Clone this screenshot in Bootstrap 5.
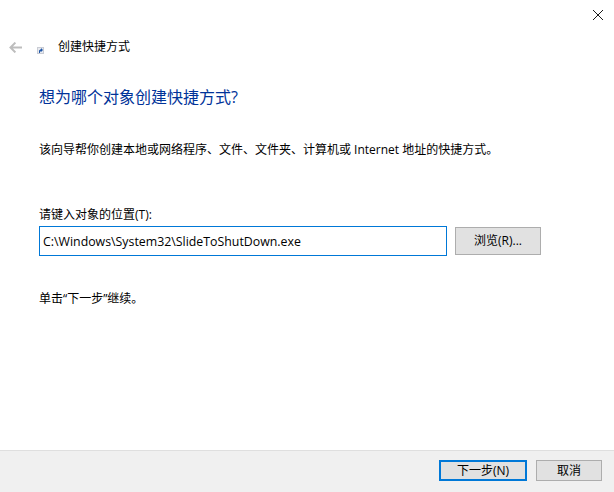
<!DOCTYPE html>
<html lang="zh-CN">
<head>
<meta charset="utf-8">
<title>创建快捷方式</title>
<link href="https://cdn.jsdelivr.net/npm/bootstrap@5.3.0/dist/css/bootstrap.min.css" rel="stylesheet">
<style>
html, body { height: 100%; }
body { font-family: "Open Sans", "Noto Sans CJK SC", sans-serif; font-size: 12px; line-height: 16px; color: #000; background: #fff; overflow: hidden; }
.wiz { height: 492px; }
.close-row { height: 30px; padding-right: 11px; padding-top: 10px; }
.nav-row { height: 16px; margin-top: 9px; padding-left: 9px; }
.back-ico { width: 13px; height: 11px; }
.sc-ico { width: 7px; height: 7px; margin-left: 15px; margin-top: 6px; }
.nav-title { margin-left: 14px; }
.wiz-body { padding-left: 39px; padding-right: 73px; }
.wiz-head { font-size: 16px; line-height: 22px; color: #003399; margin-top: 31px; }
.wiz-desc { margin-top: 34px; }
.wiz-label { margin-top: 49px; margin-bottom: 3px; }
.path-input { width: 408px; height: 30px; border: 1px solid #0078d7; border-radius: 0; padding: 0 3px; font-size: 12.35px; line-height: 16px; color: #000; box-shadow: none; }
.path-input:focus { border-color: #0078d7; box-shadow: none; }
.win-btn { background: #e1e1e1; border: 1px solid #adadad; border-radius: 0; color: #000; font-size: 12px; line-height: 16px; padding: 0; height: 28px; }
.win-btn:hover { background: #e1e1e1; border-color: #adadad; color: #000; }
.browse-btn { width: 86px; margin-left: 8px; }
.wiz-next { margin-top: 35px; }
.wiz-foot { height: 42px; background: #f0f0f0; border-top: 1px solid #dfdfdf; padding-right: 12px; padding-top: 9px; }
.next-btn { width: 88px; height: 21px; border: 2px solid #0078d7; }
.next-btn:hover { border-color: #0078d7; }
.cancel-btn { width: 66px; height: 21px; margin-left: 9px; }
</style>
</head>
<body>
<div class="wiz d-flex flex-column">
  <div class="close-row d-flex justify-content-end align-items-start">
    <svg width="10" height="10" viewBox="0 0 10 10" fill="none" stroke="#1a1a1a" stroke-width="1"><path d="M0 0L10 10M10 0L0 10"/></svg>
  </div>
  <div class="nav-row d-flex align-items-center">
    <svg class="back-ico" viewBox="0 0 13 11" fill="none" stroke="#bdbdbd" stroke-width="2"><path d="M13 5.5H1.5M6.4 .6L1.5 5.5L6.4 10.4"/></svg>
    <svg class="sc-ico" viewBox="0 0 7 7"><rect width="7" height="7" fill="#c9ccd4"/><rect x="1" y="1" width="5" height="5" fill="#e8eaef"/><path d="M2 6V3.5L4 2V1L6 3L4 5V4L3 5V6Z" fill="#1f57a8"/></svg>
    <span class="nav-title">创建快捷方式</span>
  </div>
  <div class="wiz-body flex-grow-1">
    <div class="wiz-head">想为哪个对象创建快捷方式?</div>
    <div class="wiz-desc">该向导帮你创建本地或网络程序、文件、文件夹、计算机或 Internet 地址的快捷方式。</div>
    <div class="wiz-label">请键入对象的位置(T):</div>
    <div class="d-flex align-items-center">
      <input class="form-control path-input flex-shrink-0" type="text" value="C:\Windows\System32\SlideToShutDown.exe">
      <button class="btn win-btn browse-btn flex-shrink-0" type="button">浏览(R)...</button>
    </div>
    <div class="wiz-next">单击“下一步”继续。</div>
  </div>
  <div class="wiz-foot d-flex justify-content-end align-items-start">
    <button class="btn win-btn next-btn" type="button">下一步(N)</button>
    <button class="btn win-btn cancel-btn" type="button">取消</button>
  </div>
</div>
<script src="https://cdn.jsdelivr.net/npm/bootstrap@5.3.0/dist/js/bootstrap.bundle.min.js"></script>
</body>
</html>
